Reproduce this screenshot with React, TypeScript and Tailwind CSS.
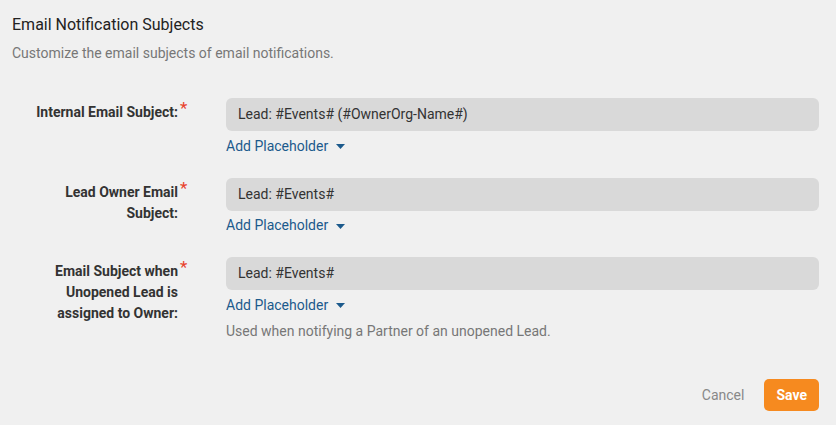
import React from "react";

function Caret() {
  return (
    <svg width="9" height="5" viewBox="0 0 9 5" className="ml-[8px] mt-[1px]">
      <path d="M0 0 L9 0 L4.5 5 Z" fill="#1c5a8c" />
    </svg>
  );
}

function Row({ label, value, help }: { label: React.ReactNode; value: string; help?: string }) {
  return (
    <div className="flex items-start">
      <div className="w-[166px] text-right font-bold text-[14px] leading-[21px] text-[#333] pt-[4px]">{label}</div>
      <div className="w-[8px] ml-[2px] text-[#e8412c] text-[17px] leading-[17px] pt-[2px]">*</div>
      <div className="ml-[38px] flex-1 flex flex-col">
        <div className="h-[33px] rounded-[6px] bg-[#d9d9d9] px-[12px] flex items-center text-[14px] text-[#333]">
          {value}
        </div>
        <div className="mt-[5px] h-[20px] flex items-center text-[14px] text-[#1c5a8c]">
          <span>Add Placeholder</span>
          <Caret />
        </div>
        {help && <div className="mt-[6px] h-[20px] flex items-center text-[14px] text-[#777]">{help}</div>}
      </div>
    </div>
  );
}

export default function App() {
  return (
    <div
      className="w-[836px] h-[425px] bg-[#f0f0f0] px-[12px] pt-[15px] overflow-hidden"
      style={{ fontFamily: "Roboto, 'Liberation Sans', sans-serif" }}
    >
      <div className="text-[16px] leading-[20px] text-[#222]">Email Notification Subjects</div>
      <div className="mt-[8px] text-[14px] leading-[20px] text-[#777]">Customize the email subjects of email notifications.</div>
      <div className="mt-[35px] pr-[5px] flex flex-col gap-[21.5px]">
        <Row label="Internal Email Subject:" value="Lead: #Events# (#OwnerOrg-Name#)" />
        <Row label={<>Lead Owner Email<br />Subject:</>} value="Lead: #Events#" />
        <Row
          label={<>Email Subject when<br />Unopened Lead is<br />assigned to Owner:</>}
          value="Lead: #Events#"
          help="Used when notifying a Partner of an unopened Lead."
        />
      </div>
      <div className="mt-[38px] pr-[5px] flex justify-end items-center">
        <span className="text-[14px] text-[#888] mr-[20px]">Cancel</span>
        <button className="h-[32px] px-[12px] rounded-[5px] bg-[#f68a1f] text-white font-bold text-[14px]">Save</button>
      </div>
    </div>
  );
}
